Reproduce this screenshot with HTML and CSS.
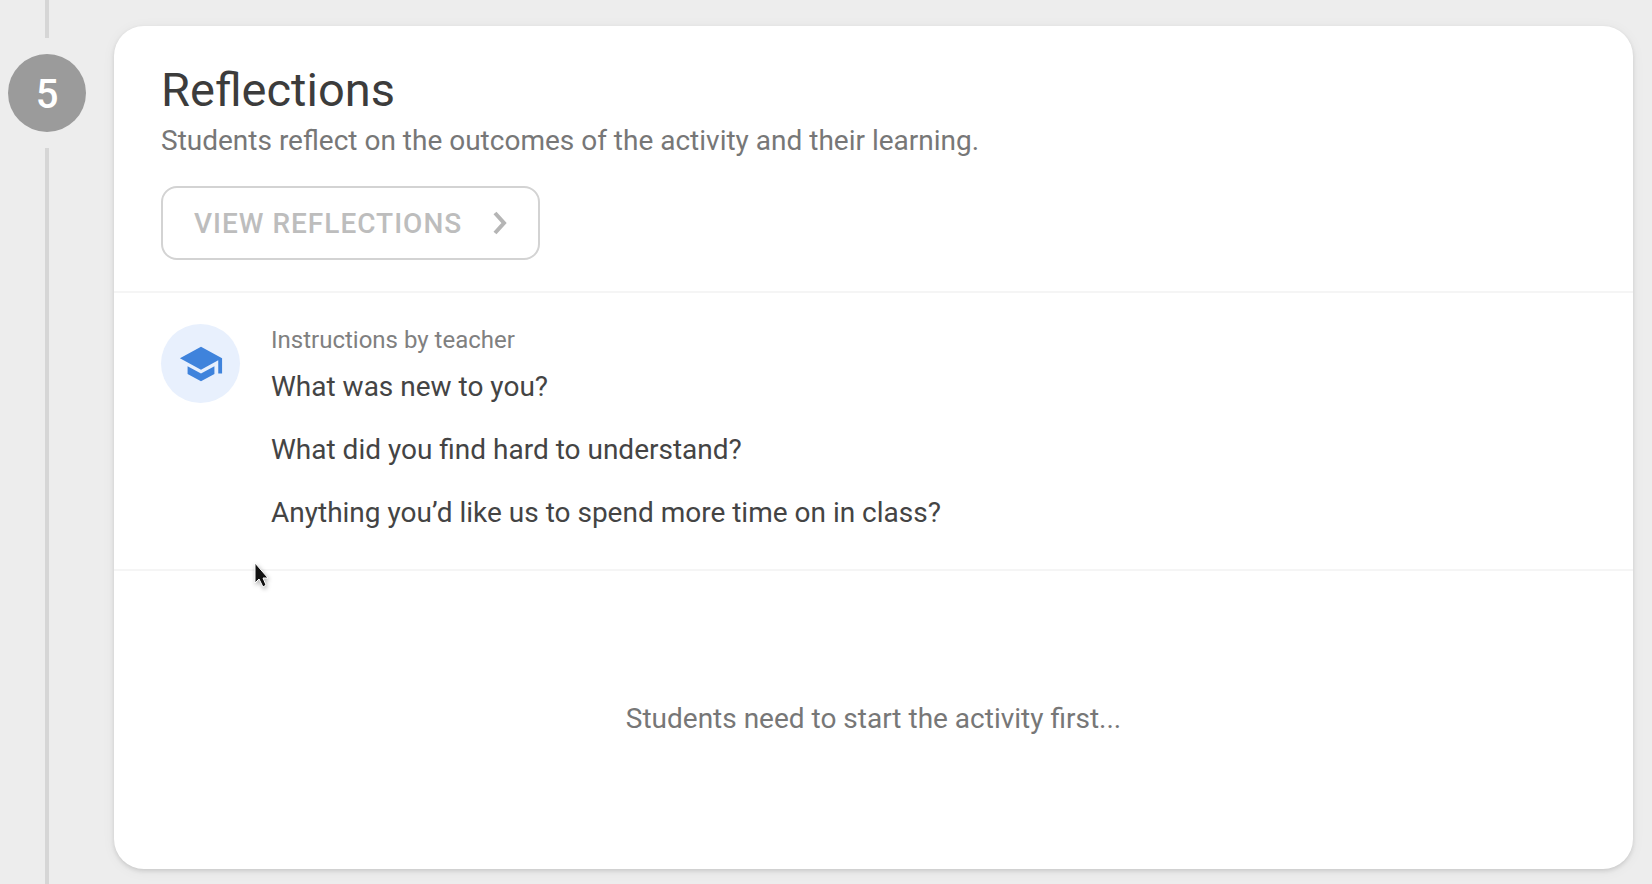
FILE: index.html
```
<!DOCTYPE html>
<html lang="en">

<head>
<meta charset="UTF-8">
<meta name="viewport" content="width=device-width, initial-scale=1.0">
<title>Reflections</title>
<link rel="stylesheet" href="styles.css">
</head>

<body>

<main class="step">
<div class="rail">
<div class="rail-line rail-top"></div>
<div class="step-number">5</div>
<div class="rail-line rail-bottom"></div>
</div>

<section class="card">
<header class="card-header">
<h1>Reflections</h1>
<p class="subtitle">Students reflect on the outcomes of the activity and their learning.</p>
<button class="view-button" type="button" disabled>
<span>View reflections</span>
<svg class="chevron" viewBox="0 0 14 24" aria-hidden="true"><path d="M2 2l9 10-9 10"/></svg>
</button>
</header>

<div class="instructions">
<div class="avatar">
<svg viewBox="0 0 24 24" aria-hidden="true"><path d="M5 13.18v4L12 21l7-3.82v-4L12 17l-7-3.82zM12 3L1 9l11 6 9-4.91V17h2V9L12 3z"/></svg>
</div>
<div class="questions">
<h2>Instructions by teacher</h2>
<p>What was new to you?</p>
<p>What did you find hard to understand?</p>
<p>Anything you’d like us to spend more time on in class?</p>
</div>
</div>

<div class="empty">
<p>Students need to start the activity first...</p>
</div>
</section>
</main>

<svg class="cursor" viewBox="0 0 18 28" aria-hidden="true"><path d="M2 1v20l4-4 4 8 3-2-3-7h5z"/></svg>

</body>

</html>
```
FILE: styles.css
```
* {
box-sizing: border-box;
}

body {
margin: 0;
background-color: #ededed;
font-family: Roboto, sans-serif;
font-size: 28px;
line-height: 32px;
color: #444444;
}

h1,
h2,
p {
margin: 0;
font-weight: 400;
}

.step {
display: flex;
gap: 20px;
min-height: 100vh;
padding-right: 19px;
}

.rail {
display: flex;
flex-direction: column;
align-items: center;
flex: none;
width: 94px;
}

.rail-line {
width: 4px;
background-color: #d6d6d6;
}

.rail-top {
height: 38px;
}

.rail-bottom {
flex: 1;
}

.step-number {
display: flex;
align-items: center;
justify-content: center;
width: 78px;
height: 78px;
margin: 16px 0;
padding-top: 3px;
border-radius: 50%;
background-color: #9b9b9b;
color: #ffffff;
font-size: 40px;
font-weight: 500;
}

.card {
flex: 1;
margin: 26px 0 15px;
border-radius: 30px;
background-color: #ffffff;
box-shadow: 0 2px 4px rgba(0, 0, 0, 0.12), 0 2px 14px rgba(0, 0, 0, 0.05);
}

.card-header {
padding: 36px 47px 31px;
border-bottom: 2px solid #f5f5f5;
}

h1 {
font-size: 47px;
line-height: 56px;
color: #3c3c3c;
}

.subtitle {
margin-top: 7px;
color: #777777;
}

.view-button {
display: flex;
align-items: center;
gap: 31px;
margin-top: 29px;
padding: 0 31px;
height: 74px;
border: 2px solid #d3d3d3;
border-radius: 16px;
background-color: #ffffff;
color: #bdbdbd;
font-family: inherit;
font-size: 28px;
font-weight: 500;
letter-spacing: 1px;
text-transform: uppercase;
}

.chevron {
width: 14px;
height: 24px;
fill: none;
stroke: #b5b5b5;
stroke-width: 4;
}

.instructions {
display: flex;
gap: 31px;
padding: 31px 47px 40px;
border-bottom: 2px solid #f5f5f5;
}

.avatar {
display: flex;
align-items: center;
justify-content: center;
flex: none;
width: 79px;
height: 79px;
border-radius: 50%;
background-color: #e8f0fd;
}

.avatar svg {
width: 46px;
height: 46px;
fill: #3f83dc;
}

h2 {
margin-bottom: 15px;
font-size: 24px;
color: #808080;
}

.questions p + p {
margin-top: 31px;
}

.empty {
padding: 132px 47px;
text-align: center;
color: #777777;
}

/* mouse pointer over the card */
.cursor {
position: absolute;
left: 253px;
top: 562px;
width: 18px;
height: 28px;
fill: #111111;
stroke: #ffffff;
stroke-width: 1;
filter: drop-shadow(1px 2px 2px rgba(0, 0, 0, 0.3));
}
```
